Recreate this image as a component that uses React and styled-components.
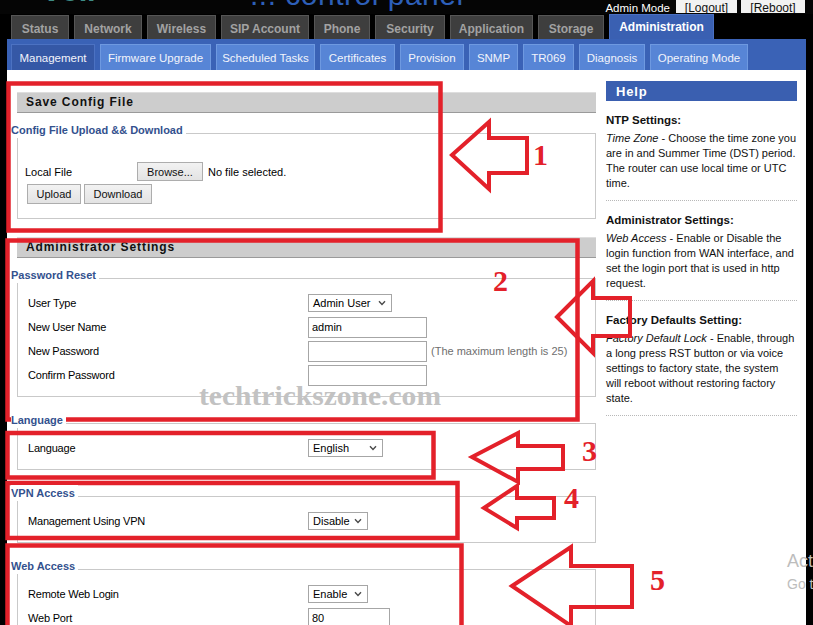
import styled, { createGlobalStyle } from "styled-components";

const GlobalStyles = createGlobalStyle`
  html, body {
    margin: 0;
    padding: 0;
    background: #000;
  }
  body {
    font-family: "Liberation Sans", Arial, sans-serif;
    font-size: 11px;
    color: #000;
  }
`;

const topTabs = [
  { label: "Status", w: 58 },
  { label: "Network", w: 68 },
  { label: "Wireless", w: 69 },
  { label: "SIP Account", w: 88 },
  { label: "Phone", w: 56 },
  { label: "Security", w: 70 },
  { label: "Application", w: 83 },
  { label: "Storage", w: 66 },
  { label: "Administration", w: 105, active: true },
];

const subTabs = [
  { label: "Management", w: 84, active: true },
  { label: "Firmware Upgrade", w: 111 },
  { label: "Scheduled Tasks", w: 99 },
  { label: "Certificates", w: 75 },
  { label: "Provision", w: 64 },
  { label: "SNMP", w: 49 },
  { label: "TR069", w: 51 },
  { label: "Diagnosis", w: 66 },
  { label: "Operating Mode", w: 98 },
];

const RED = "#e3212a";

function Chevron() {
  return (
    <svg width="8" height="6" viewBox="0 0 8 6">
      <path d="M1 1.2 L4 4.4 L7 1.2" fill="none" stroke="#4a4a4a" strokeWidth="1.4" />
    </svg>
  );
}

function Select({ value, width }) {
  return (
    <SelectBox $w={width}>
      <span>{value}</span>
      <Chevron />
    </SelectBox>
  );
}

function Group({ title, children, pad }) {
  return (
    <>
      <Legend>
        <LegendText>{title}</LegendText>
        <LegendLine />
      </Legend>
      <GroupBody $pad={pad}>{children}</GroupBody>
    </>
  );
}

function Annotations() {
  return (
    <Overlay width="813" height="625" viewBox="0 0 813 625">
      <g fill="none" stroke={RED} strokeWidth="4.5">
        <rect x="8.5" y="83.5" width="432" height="147" />
        <rect x="7.5" y="240.5" width="570" height="179" />
        <rect x="7.5" y="433" width="426" height="44.5" />
        <rect x="7.5" y="483" width="450" height="55" />
        <rect x="7.5" y="545.5" width="454" height="100" />
      </g>
      <g fill="none" stroke={RED} strokeWidth="4" strokeLinejoin="miter">
        <polygon points="452,155 489,122 489,138 527,138 527,173 489,173 489,189" />
        <polygon points="557,317 593,281 593,298 630,298 630,336 593,336 593,353" />
        <polygon points="472,457 518,433 518,446 563,446 563,469 518,469 518,482" />
        <polygon points="484,508 517,486 517,498 554,498 554,518 517,518 517,528" />
        <polygon points="512,586 571,547 571,566 632,566 632,607 571,607 571,626" />
      </g>
      <g fill={RED} fontFamily="'Liberation Serif', serif" fontWeight="bold" fontSize="30">
        <text x="533" y="165">1</text>
        <text x="493" y="291">2</text>
        <text x="582" y="461">3</text>
        <text x="564" y="508">4</text>
        <text x="650" y="590">5</text>
      </g>
      <text
        x="199"
        y="405"
        fontFamily="'Liberation Serif', serif"
        fontWeight="bold"
        fontSize="28"
        fill="#c2c2c2"
        textLength="242"
        lengthAdjust="spacingAndGlyphs"
      >
        techtrickszone.com
      </text>
      <g fontFamily="'Liberation Sans', sans-serif" fill="#bdbdbd">
        <text x="787" y="567" fontSize="18">Activate Windows</text>
        <text x="787" y="589" fontSize="14">Go to Settings to activate Windows.</text>
      </g>
    </Overlay>
  );
}

export default function App() {
  return (
    <Page>
      <GlobalStyles />
      <TopBar>
        <Logo>VoIP</Logo>
        <PanelTitle>... control panel</PanelTitle>
        <Session>
          <ModeText>Admin Mode</ModeText>
          <SessionLink $w={61}>[Logout]</SessionLink>
          <SessionLink $w={64}>[Reboot]</SessionLink>
        </Session>
      </TopBar>

      <TabRow>
        {topTabs.map((t) => (
          <Tab key={t.label} $w={t.w} $active={t.active}>
            {t.label}
          </Tab>
        ))}
      </TabRow>

      <SubNav>
        {subTabs.map((t) => (
          <SubTab key={t.label} $w={t.w} $active={t.active}>
            {t.label}
          </SubTab>
        ))}
      </SubNav>

      <Content>
        <MainCol>
          <SectionBar>Save Config File</SectionBar>
          <Group title="Config File Upload && Download" pad="config">
            <FileRow>
              <FileLabel>Local File</FileLabel>
              <Button $w={66} $h={19}>Browse...</Button>
              <Muted>No file selected.</Muted>
            </FileRow>
            <ButtonRow>
              <Button $w={54} $h={20}>Upload</Button>
              <Button $w={68} $h={20}>Download</Button>
            </ButtonRow>
          </Group>

          <SectionBar $spaced>Administrator Settings</SectionBar>
          <Group title="Password Reset">
            <Row>
              <Label>User Type</Label>
              <Select value="Admin User" width={84} />
            </Row>
            <Row>
              <Label>New User Name</Label>
              <TextInput $w={119} defaultValue="admin" readOnly />
            </Row>
            <Row>
              <Label>New Password</Label>
              <TextInput $w={119} type="password" readOnly />
              <Hint>(The maximum length is 25)</Hint>
            </Row>
            <Row>
              <Label>Confirm Password</Label>
              <TextInput $w={119} type="password" readOnly />
            </Row>
          </Group>

          <Group title="Language">
            <Row>
              <Label>Language</Label>
              <Select value="English" width={75} />
            </Row>
          </Group>

          <Group title="VPN Access">
            <Row>
              <Label>Management Using VPN</Label>
              <Select value="Disable" width={60} />
            </Row>
          </Group>

          <Group title="Web Access">
            <Row>
              <Label>Remote Web Login</Label>
              <Select value="Enable" width={60} />
            </Row>
            <Row>
              <Label>Web Port</Label>
              <TextInput $w={82} defaultValue="80" readOnly />
            </Row>
          </Group>
        </MainCol>

        <HelpCol>
          <HelpTitle>Help</HelpTitle>
          <HelpItem>
            <HelpHeading>NTP Settings:</HelpHeading>
            <HelpText>
              <em>Time Zone</em> - Choose the time zone you
              <br />
              are in and Summer Time (DST) period.
              <br />
              The router can use local time or UTC
              <br />
              time.
            </HelpText>
          </HelpItem>
          <HelpItem>
            <HelpHeading>Administrator Settings:</HelpHeading>
            <HelpText>
              <em>Web Access</em> - Enable or Disable the
              <br />
              login function from WAN interface, and
              <br />
              set the login port that is used in http
              <br />
              request.
            </HelpText>
          </HelpItem>
          <HelpItem>
            <HelpHeading>Factory Defaults Setting:</HelpHeading>
            <HelpText>
              <em>Factory Default Lock</em> - Enable, through
              <br />
              a long press RST button or via voice
              <br />
              settings to factory state, the system
              <br />
              will reboot without restoring factory
              <br />
              state.
            </HelpText>
          </HelpItem>
        </HelpCol>
      </Content>

      <Annotations />
    </Page>
  );
}

const Page = styled.div`
  position: relative;
  width: 813px;
  height: 625px;
  overflow: hidden;
  background: #000;
`;

const TopBar = styled.div`
  display: flex;
  align-items: flex-start;
  height: 14px;
  overflow: hidden;
  background: #050505;
`;

const Logo = styled.div`
  width: 207px;
  margin-left: 43px;
  margin-top: -24px;
  font-size: 30px;
  line-height: 30px;
  font-weight: bold;
  font-style: italic;
  color: #3d8c86;
`;

const PanelTitle = styled.div`
  margin-top: -20px;
  font-size: 30px;
  line-height: 30px;
  color: #2d5fb8;
  letter-spacing: 0.5px;
  white-space: nowrap;
`;

const Session = styled.div`
  display: flex;
  align-items: flex-start;
  gap: 4px;
  margin-left: auto;
  padding-right: 8px;
`;

const ModeText = styled.span`
  color: #fff;
  font-size: 11.5px;
  line-height: 16px;
  margin-right: 2px;
`;

const SessionLink = styled.span`
  width: ${(p) => p.$w}px;
  height: 13px;
  overflow: hidden;
  background: #f2f2f2;
  text-align: center;
  font-size: 12px;
  line-height: 16px;
  text-decoration: underline;
  color: #111;
`;

const TabRow = styled.div`
  display: flex;
  align-items: flex-end;
  gap: 5px;
  height: 25px;
  padding-left: 11px;
`;

const Tab = styled.div`
  box-sizing: border-box;
  width: ${(p) => p.$w}px;
  height: ${(p) => (p.$active ? 25 : 24)}px;
  background: ${(p) => (p.$active ? "#3a60b2" : "#3e3e3e")};
  border: 1px solid ${(p) => (p.$active ? "#4a70c2" : "#565656")};
  border-bottom: none;
  color: ${(p) => (p.$active ? "#fff" : "#a2a2a2")};
  font-size: 12px;
  font-weight: bold;
  text-align: center;
  line-height: ${(p) => (p.$active ? 25 : 26)}px;
`;

const SubNav = styled.div`
  box-sizing: border-box;
  display: flex;
  align-items: flex-end;
  gap: 5px;
  height: 31px;
  margin: 0 7px;
  padding-left: 4px;
  background: #3a62b6;
`;

const SubTab = styled.div`
  box-sizing: border-box;
  width: ${(p) => p.$w}px;
  height: 26px;
  background: ${(p) => (p.$active ? "#3558a6" : "#5785d6")};
  border: 1px solid ${(p) => (p.$active ? "#4c72c2" : "#6e99e0")};
  border-bottom: none;
  color: #f2f4fb;
  font-size: 11.5px;
  text-align: center;
  line-height: 26px;
  white-space: nowrap;
`;

const Content = styled.div`
  display: flex;
  height: 555px;
  margin: 0 7px;
  background: #fff;
  overflow: hidden;
`;

const MainCol = styled.div`
  box-sizing: border-box;
  width: 589px;
  padding: 22px 0 0 4px;
`;

const SectionBar = styled.div`
  box-sizing: border-box;
  height: 21px;
  margin: ${(p) => (p.$spaced ? "18px" : "0")} 0 0 6px;
  padding-left: 9px;
  background: #cdcdcd;
  border-top: 1px solid #dedede;
  border-bottom: 1px solid #9a9a9a;
  font-size: 12px;
  font-weight: bold;
  letter-spacing: 0.9px;
  line-height: 19px;
  color: #111;
`;

const Legend = styled.div`
  display: flex;
  align-items: flex-end;
  height: 16px;
  margin-top: 5px;
`;

const LegendText = styled.span`
  position: relative;
  z-index: 1;
  margin-bottom: -4px;
  padding-right: 3px;
  background: #fff;
  color: #33518e;
  font-size: 11px;
  font-weight: bold;
  line-height: 16px;
  white-space: nowrap;
`;

const LegendLine = styled.div`
  flex: 1;
  border-bottom: 1px solid #c9c9c9;
`;

const GroupBody = styled.div`
  margin-left: 6px;
  border: 1px solid #c9c9c9;
  border-top: none;
  padding: ${(p) => (p.$pad === "config" ? "28px 0 14px 7px" : "12px 0 9px 10px")};

  & + ${Legend} {
    margin-top: 11px;
  }
`;

const Row = styled.div`
  display: flex;
  align-items: center;
  height: 24px;
`;

const Label = styled.span`
  width: 280px;
  font-size: 11px;
  letter-spacing: -0.2px;
`;

const FileRow = styled.div`
  display: flex;
  align-items: center;
  height: 19px;
`;

const FileLabel = styled.span`
  width: 112px;
  font-size: 11px;
`;

const ButtonRow = styled.div`
  display: flex;
  gap: 3px;
  margin: 3px 0 0 2px;
`;

const Button = styled.button`
  box-sizing: border-box;
  width: ${(p) => p.$w}px;
  height: ${(p) => p.$h}px;
  padding: 0;
  border: 1px solid #adadad;
  border-radius: 0;
  background: linear-gradient(#f2f2f2, #e3e3e3);
  font-family: "Liberation Sans", Arial, sans-serif;
  font-size: 11px;
  color: #111;
`;

const Muted = styled.span`
  margin-left: 5px;
  font-size: 11px;
`;

const SelectBox = styled.div`
  box-sizing: border-box;
  display: inline-flex;
  align-items: center;
  justify-content: space-between;
  width: ${(p) => p.$w}px;
  height: 18px;
  padding: 0 5px 0 4px;
  border: 1px solid #a6a6a6;
  background: #fff;
  font-size: 11px;
`;

const TextInput = styled.input`
  box-sizing: border-box;
  width: ${(p) => p.$w}px;
  height: 21px;
  margin: 0;
  padding: 0 3px;
  border: 1px solid #a6a6a6;
  border-radius: 0;
  outline: none;
  font-family: "Liberation Sans", Arial, sans-serif;
  font-size: 11px;
  color: #000;
`;

const Hint = styled.span`
  margin-left: 4px;
  font-size: 11px;
  color: #6e6e6e;
`;

const HelpCol = styled.div`
  width: 191px;
  margin-left: 10px;
  padding-top: 11px;
`;

const HelpTitle = styled.div`
  height: 20px;
  padding-left: 10px;
  background: #3a5fb0;
  color: #fff;
  font-size: 13px;
  font-weight: bold;
  letter-spacing: 0.8px;
  line-height: 21px;
`;

const HelpItem = styled.div`
  padding: 12px 0 9px;
  border-bottom: 1px dotted #b8b8b8;
`;

const HelpHeading = styled.div`
  margin-bottom: 3px;
  font-size: 11.5px;
  font-weight: bold;
  line-height: 15px;
  color: #111;
`;

const HelpText = styled.div`
  font-size: 11px;
  line-height: 15px;
  color: #111;
  white-space: nowrap;
`;

const Overlay = styled.svg`
  position: absolute;
  left: 0;
  top: 0;
  pointer-events: none;
`;
